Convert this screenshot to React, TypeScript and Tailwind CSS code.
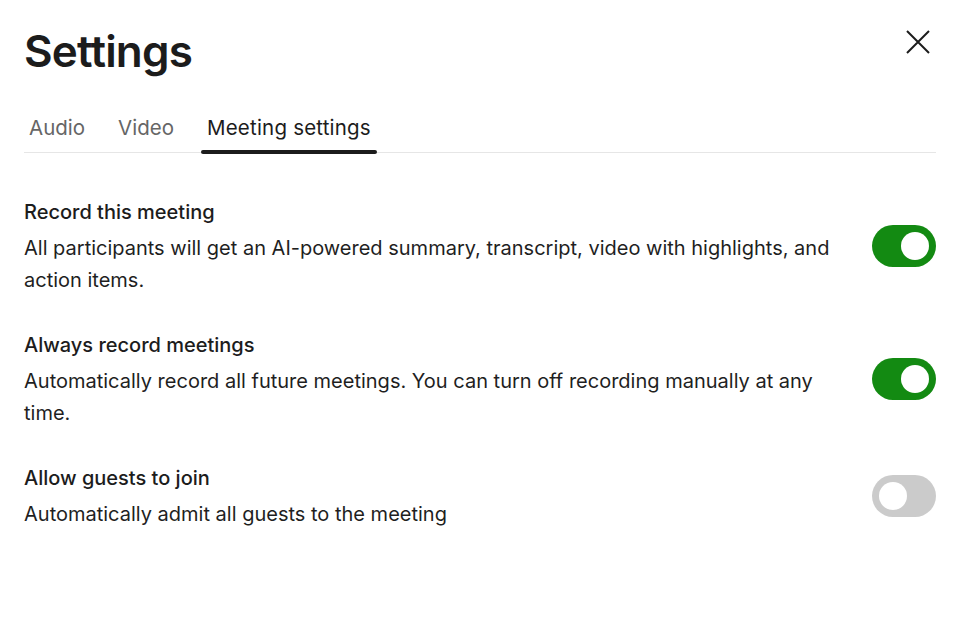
import { useState } from "react";

const rows = [
  {
    title: "Record this meeting",
    description:
      "All participants will get an AI-powered summary, transcript, video with highlights, and action items.",
    on: true,
  },
  {
    title: "Always record meetings",
    description:
      "Automatically record all future meetings. You can turn off recording manually at any time.",
    on: true,
  },
  {
    title: "Allow guests to join",
    description: "Automatically admit all guests to the meeting",
    on: false,
  },
];

function Toggle({ on, onClick }: { on: boolean; onClick: () => void }) {
  return (
    <button
      onClick={onClick}
      className={`flex h-[42px] w-16 shrink-0 items-center rounded-full px-[7px] ${
        on ? "justify-end bg-[#138a12]" : "justify-start bg-[#cbcbcb]"
      }`}
    >
      <span className="h-7 w-7 rounded-full bg-white" />
    </button>
  );
}

export default function App() {
  const [tab, setTab] = useState("Meeting settings");
  const [values, setValues] = useState(rows.map((r) => r.on));

  return (
    <div className="h-[626px] w-[960px] bg-white px-6 pt-[26px] font-['Inter',sans-serif] text-[#1c1c1c]">
      <div className="flex items-start justify-between">
        <h1 className="text-[44px] font-semibold leading-[50px] tracking-[-0.8px]">
          Settings
        </h1>
        <button className="mr-[1px] mt-[-1px] p-1 text-[#1c1c1c]">
          <svg width="26" height="26" viewBox="0 0 26 26" fill="none">
            <path
              d="M2 2L24 24M24 2L2 24"
              stroke="currentColor"
              strokeWidth="2"
            />
          </svg>
        </button>
      </div>

      <div className="mt-[40px] flex border-b border-[#e6e6e6]">
        {["Audio", "Video", "Meeting settings"].map((t) => (
          <button
            key={t}
            onClick={() => setTab(t)}
            className={`relative -mb-px px-[6px] pb-[13px] text-[20.5px] leading-6 ${
              t === tab ? "text-[#1c1c1c]" : "text-[#666666]"
            } ${t === "Audio" ? "mr-[21px] pl-[5px]" : t === "Video" ? "mr-[21px]" : "tracking-[0.2px]"}`}
          >
            {t}
            {t === tab && (
              <span className="absolute bottom-[-1px] left-0 right-0 h-1 rounded-full bg-[#1c1c1c]" />
            )}
          </button>
        ))}
      </div>

      <div className="mt-[43px] flex flex-col gap-[33px]">
        {rows.map((r, i) => (
          <div key={r.title} className="flex items-center gap-10">
            <div className="flex flex-1 flex-col gap-1">
              <div className="text-[20px] font-medium leading-8">{r.title}</div>
              <div className="text-[20px] leading-8 text-[#1f1f1f]">{r.description}</div>
            </div>
            <Toggle
              on={values[i]}
              onClick={() =>
                setValues(values.map((v, j) => (j === i ? !v : v)))
              }
            />
          </div>
        ))}
      </div>
    </div>
  );
}
